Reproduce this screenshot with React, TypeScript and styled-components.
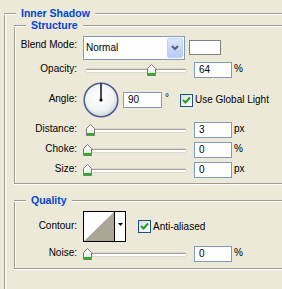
import React from 'react';
import styled, { createGlobalStyle } from 'styled-components';

const Global = createGlobalStyle`
  html, body { margin: 0; padding: 0; overflow: hidden; background: #ece9d8; }
  body {
    font-family: "Liberation Sans", Arial, sans-serif;
    font-size: 10px;
    color: #000;
  }
`;

const EDGE = '#9d9c94';

const Page = styled.div`
  padding: 7px 0 0 4px;
  height: 282px;
  overflow: hidden;
`;

const Group = styled.div<{ $mt?: number; $w: number }>`
  width: ${(p) => p.$w}px;
  margin-top: ${(p) => p.$mt ?? 0}px;
`;

const Header = styled.div`
  display: flex;
  align-items: flex-start;
  height: 13px;
`;

const Line = styled.div<{ $lead?: boolean }>`
  height: 0;
  margin-top: 6px;
  border-top: 1px solid ${EDGE};
  border-bottom: 1px solid #fff;
  ${(p) => (p.$lead ? 'flex: none; width: 12px;' : 'flex: 1;')}
`;

const Title = styled.div`
  flex: none;
  padding: 0 5px;
  color: #0046d5;
  font-weight: bold;
  font-size: 10.5px;
  line-height: 13px;
  white-space: nowrap;
`;

const Frame = styled.div<{ $pb?: number; $open?: boolean; $pl?: number }>`
  margin-top: -7px;
  padding: 7px 0 ${(p) => p.$pb ?? 0}px ${(p) => p.$pl ?? 0}px;
  border-left: 1px solid ${EDGE};
  box-shadow: inset 1px 0 0 #fff ${(p) => (p.$open ? '' : ', 0 1px 0 #fff')};
  ${(p) => (p.$open ? 'min-height: 400px;' : `border-bottom: 1px solid ${EDGE};`)}
`;

const Row = styled.div<{ $h: number; $mt: number }>`
  display: flex;
  align-items: center;
  height: ${(p) => p.$h}px;
  margin-top: ${(p) => p.$mt}px;
`;

const Label = styled.div<{ $top?: number }>`
  flex: none;
  width: 62px;
  margin-right: 6px;
  text-align: right;
  line-height: 12px;
  white-space: nowrap;
  ${(p) =>
    p.$top !== undefined
      ? `align-self: flex-start; margin-top: ${p.$top}px;`
      : 'margin-bottom: 2px;'}
`;

const Select = styled.div`
  box-sizing: border-box;
  flex: none;
  width: 102px;
  height: 24px;
  padding: 1px;
  border: 1px solid #7f9db9;
  background: #fff;
  display: flex;
  align-items: center;
`;

const SelectText = styled.span`
  flex: 1;
  padding-left: 1px;
  line-height: 12px;
`;

const SelectButton = styled.div`
  box-sizing: border-box;
  flex: none;
  width: 16px;
  height: 100%;
  border: 1px solid #bccff7;
  border-radius: 2px;
  background: linear-gradient(#dce7fe, #b7ccf8);
  display: flex;
  align-items: center;
  justify-content: center;
`;

const Swatch = styled.div`
  box-sizing: border-box;
  flex: none;
  align-self: flex-start;
  margin: 4px 0 0 4px;
  width: 32px;
  height: 15px;
  border: 1px solid #808080;
  background: #fff;
`;

const SliderBox = styled.div`
  position: relative;
  flex: none;
  width: 108px;
  height: 16px;
  padding-left: 3px;
  box-sizing: border-box;
  display: flex;
  align-items: center;
`;

const Track = styled.div`
  box-sizing: border-box;
  width: 100px;
  height: 3px;
  border-radius: 2px;
  border-top: 1px solid #a3a29b;
  background: #fff;
  box-shadow: 0 0 0 0.5px #c9c7bb;
`;

const Thumb = styled.svg`
  position: absolute;
  top: 2px;
`;

const NumBox = styled.div<{ $w?: number; $ml?: number }>`
  box-sizing: border-box;
  flex: none;
  width: ${(p) => p.$w ?? 38}px;
  height: 16px;
  margin-left: ${(p) => p.$ml ?? 3}px;
  padding-left: 4px;
  border: 1px solid #7f9db9;
  background: #fff;
  line-height: 14px;
`;

const Unit = styled.span`
  margin-left: 2px;
  margin-bottom: 2px;
  line-height: 12px;
`;

const Degree = styled.span`
  margin-left: 3px;
  align-self: flex-start;
  margin-top: 10px;
  line-height: 12px;
`;

const CheckBox = styled.div<{ $ml: number }>`
  box-sizing: border-box;
  flex: none;
  width: 13px;
  height: 13px;
  margin-left: ${(p) => p.$ml}px;
  border: 1px solid #1c5180;
  background: linear-gradient(135deg, #dcdcd7, #fff);
  display: flex;
  align-items: center;
  justify-content: center;
`;

const CheckText = styled.span`
  margin-left: 2px;
  line-height: 12px;
  white-space: nowrap;
`;

const ContourBox = styled.div`
  box-sizing: border-box;
  flex: none;
  width: 43px;
  height: 31px;
  border: 1px solid #000;
  background: #fff;
  display: flex;
`;

const ContourArrow = styled.div`
  flex: 1;
  border-left: 1px solid #000;
  display: flex;
  justify-content: center;
  padding-top: 11px;
`;

const Chevron = () => (
  <svg width="8" height="6" viewBox="0 0 8 6">
    <path d="M1 1 L4 4 L7 1" fill="none" stroke="#4d6185" strokeWidth="2" />
  </svg>
);

const ThumbIcon = ({ left }: { left: number }) => (
  <Thumb width="9" height="12" viewBox="0 0 9 12" style={{ left }}>
    <defs>
      <linearGradient id="tg" x1="0" y1="0" x2="0" y2="1">
        <stop offset="0" stopColor="#ffffff" />
        <stop offset="1" stopColor="#e4eadf" />
      </linearGradient>
    </defs>
    <path d="M4.5 0.5 L8.5 4.5 L8.5 11.5 L0.5 11.5 L0.5 4.5 Z" fill="url(#tg)" stroke="#7c7c74" />
    <rect x="1" y="9" width="7" height="2" fill="#21b421" />
  </Thumb>
);

const Check = () => (
  <svg width="9" height="9" viewBox="0 0 9 9">
    <path d="M1 4 L3.5 6.5 L8 1.5" fill="none" stroke="#21a121" strokeWidth="2" />
  </svg>
);

const Dial = () => (
  <svg width="36" height="36" viewBox="0 0 36 36" style={{ flex: 'none' }}>
    <defs>
      <radialGradient id="dg" cx="0.45" cy="0.4" r="0.6">
        <stop offset="0" stopColor="#ffffff" />
        <stop offset="0.7" stopColor="#f2f3f6" />
        <stop offset="1" stopColor="#cdd2e0" />
      </radialGradient>
    </defs>
    <circle cx="18" cy="18" r="16.8" fill="url(#dg)" stroke="#4b5b8c" strokeWidth="1.5" />
    <line x1="18" y1="18" x2="18" y2="1.5" stroke="#000" strokeWidth="1.4" />
    <circle cx="18" cy="18" r="1.6" fill="#000" />
  </svg>
);

const SliderRow = ({
  label,
  value,
  unit,
  mt,
}: {
  label: string;
  value: number;
  unit: string;
  mt: number;
}) => (
  <Row $h={16} $mt={mt}>
    <Label>{label}</Label>
    <SliderBox>
      <Track />
      <ThumbIcon left={value} />
    </SliderBox>
    <NumBox>{value}</NumBox>
    <Unit>{unit}</Unit>
  </Row>
);

export default function App() {
  return (
    <>
      <Global />
      <Page>
        <Group $w={340}>
          <Header>
            <Line $lead />
            <Title>Inner Shadow</Title>
            <Line />
          </Header>
          <Frame $open $pl={9}>
            <Group $w={330} $mt={-1}>
              <Header>
                <Line $lead />
                <Title>Structure</Title>
                <Line />
              </Header>
              <Frame $pb={5}>
                <Row $h={24} $mt={4}>
                  <Label $top={3}>Blend Mode:</Label>
                  <Select>
                    <SelectText>Normal</SelectText>
                    <SelectButton>
                      <Chevron />
                    </SelectButton>
                  </Select>
                  <Swatch />
                </Row>
                <SliderRow label="Opacity:" value={64} unit="%" mt={2} />
                <Row $h={36} $mt={4}>
                  <Label>Angle:</Label>
                  <Dial />
                  <NumBox $w={39} $ml={4}>
                    90
                  </NumBox>
                  <Degree>°</Degree>
                  <CheckBox $ml={11}>
                    <Check />
                  </CheckBox>
                  <CheckText>Use Global Light</CheckText>
                </Row>
                <SliderRow label="Distance:" value={3} unit="px" mt={4} />
                <SliderRow label="Choke:" value={0} unit="%" mt={4} />
                <SliderRow label="Size:" value={0} unit="px" mt={4} />
              </Frame>
            </Group>
            <Group $w={330} $mt={10}>
              <Header>
                <Line $lead />
                <Title>Quality</Title>
                <Line />
              </Header>
              <Frame $pb={6}>
                <Row $h={31} $mt={4}>
                  <Label>Contour:</Label>
                  <ContourBox>
                    <svg width="30" height="29" viewBox="0 0 30 29" style={{ flex: 'none' }}>
                      <polygon points="0,29 30,0 30,29" fill="#aba797" />
                    </svg>
                    <ContourArrow>
                      <svg width="5" height="3" viewBox="0 0 5 3">
                        <polygon points="0,0 5,0 2.5,3" fill="#000" />
                      </svg>
                    </ContourArrow>
                  </ContourBox>
                  <CheckBox $ml={12}>
                    <Check />
                  </CheckBox>
                  <CheckText>Anti-aliased</CheckText>
                </Row>
                <SliderRow label="Noise:" value={0} unit="%" mt={4} />
              </Frame>
            </Group>
          </Frame>
        </Group>
      </Page>
    </>
  );
}
